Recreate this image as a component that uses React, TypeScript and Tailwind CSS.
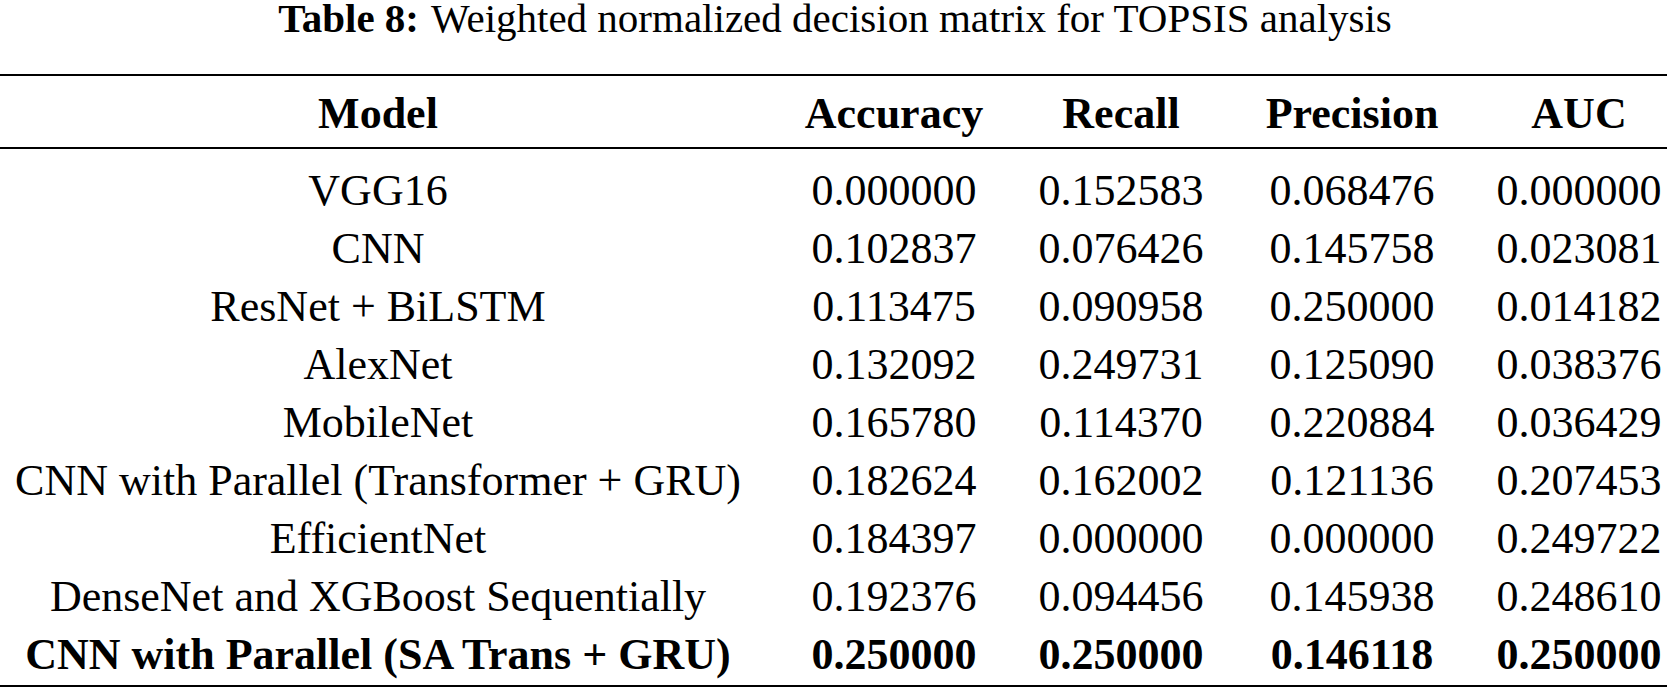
import React from "react";

const rows: { model: string; v: string[]; bold?: boolean }[] = [
  { model: "VGG16", v: ["0.000000", "0.152583", "0.068476", "0.000000"] },
  { model: "CNN", v: ["0.102837", "0.076426", "0.145758", "0.023081"] },
  { model: "ResNet + BiLSTM", v: ["0.113475", "0.090958", "0.250000", "0.014182"] },
  { model: "AlexNet", v: ["0.132092", "0.249731", "0.125090", "0.038376"] },
  { model: "MobileNet", v: ["0.165780", "0.114370", "0.220884", "0.036429"] },
  { model: "CNN with Parallel (Transformer + GRU)", v: ["0.182624", "0.162002", "0.121136", "0.207453"] },
  { model: "EfficientNet", v: ["0.184397", "0.000000", "0.000000", "0.249722"] },
  { model: "DenseNet and XGBoost Sequentially", v: ["0.192376", "0.094456", "0.145938", "0.248610"] },
  { model: "CNN with Parallel (SA Trans + GRU)", v: ["0.250000", "0.250000", "0.146118", "0.250000"], bold: true },
];

const grid = "grid grid-cols-[756px_276px_178px_284px_170px] items-center whitespace-nowrap text-center";

export default function App() {
  return (
    <div
      className="w-[1670px] h-[690px] bg-white text-black overflow-hidden"
      style={{ fontFamily: '"Liberation Serif", "Times New Roman", serif' }}
    >
      <div className="h-[36px] leading-[36px] text-[41px] text-center whitespace-nowrap">
        <span className="font-bold">Table 8:</span>
        <span className="ml-[12px]">Weighted normalized decision matrix for TOPSIS analysis</span>
      </div>
      <div className="mt-[38px] w-[1667px]">
        <div className="h-[2px] bg-black" />
        <div className={`${grid} h-[71px] pt-[5px] text-[44px] font-bold`}>
          <div>Model</div>
          <div>Accuracy</div>
          <div>Recall</div>
          <div>Precision</div>
          <div>AUC</div>
        </div>
        <div className="h-[2px] bg-black" />
        <div className="pt-[9px] pb-[5px]">
          {rows.map((r) => (
            <div key={r.model} className={`${grid} h-[58px] text-[44px] ${r.bold ? "font-bold" : ""}`}>
              <div>{r.model}</div>
              {r.v.map((x, i) => (
                <div key={i}>{x}</div>
              ))}
            </div>
          ))}
        </div>
        <div className="h-[2px] bg-black" />
      </div>
    </div>
  );
}
